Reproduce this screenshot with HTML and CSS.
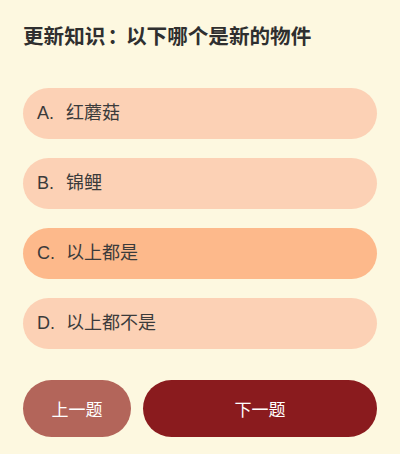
FILE: index.html
```html
<!DOCTYPE html>
<html lang="zh">
<head>
    <meta charset="UTF-8">
    <meta name="viewport" content="width=device-width, initial-scale=1.0">
    <title>知识问答</title>
    <link rel="stylesheet" href="styles.css">
</head>
<body>
    <div class="quiz">
        <h2 class="question">更新知识<span class="colon">：</span>以下哪个是新的物件</h2>
        <div class="options">
            <div class="option"><span class="letter">A.</span><span>红蘑菇</span></div>
            <div class="option"><span class="letter">B.</span><span>锦鲤</span></div>
            <div class="option selected"><span class="letter">C.</span><span>以上都是</span></div>
            <div class="option"><span class="letter">D.</span><span>以上都不是</span></div>
        </div>
        <div class="nav">
            <button class="btn btn-prev">上一题</button>
            <button class="btn btn-next">下一题</button>
        </div>
    </div>
</body>
</html>
```

FILE: styles.css
```css
body {
    margin: 0;
    background-color: #fdf8e0;
    font-family: "Liberation Sans", "Noto Sans CJK SC", sans-serif;
    color: #333;
}
.quiz {
    padding: 23px;
}
.question {
    margin: 0 0 37px;
    font-size: 20.6px;
    line-height: 28px;
    font-weight: bold;
    color: #2f2f2f;
}
.question .colon {
    display: inline-block;
    width: 1em;
    padding-left: 0.1em;
    box-sizing: border-box;
}
.options {
    display: flex;
    flex-direction: column;
    gap: 19px;
}
.option {
    display: flex;
    align-items: baseline;
    height: 51px;
    line-height: 51px;
    padding-left: 14px;
    border-radius: 26px;
    background-color: #fcd1b5;
    font-size: 18px;
    color: #3b3b3b;
}
.option.selected {
    background-color: #fdb98b;
}
.letter {
    width: 29px;
}
.nav {
    display: flex;
    gap: 12px;
    margin-top: 31px;
}
.btn {
    height: 57px;
    border: none;
    border-radius: 29px;
    color: #fff;
    font-family: inherit;
    font-size: 17px;
    cursor: pointer;
}
.btn-prev {
    width: 108px;
    background-color: #b3655a;
}
.btn-next {
    flex: 1;
    background-color: #8a1b1e;
}
```
